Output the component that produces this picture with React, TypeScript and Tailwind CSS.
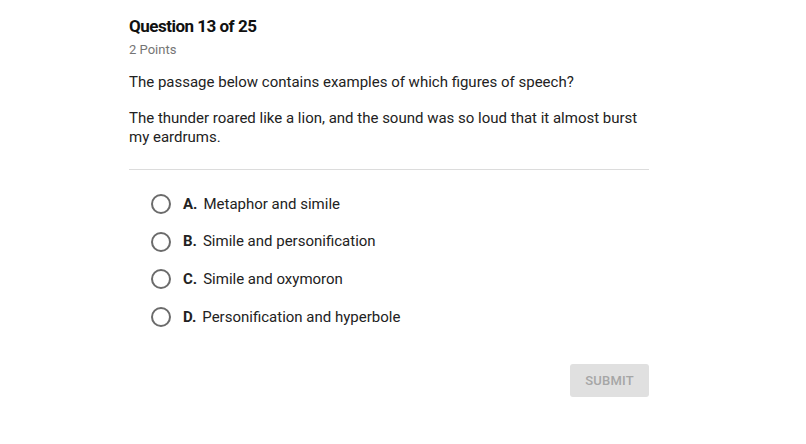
import { useState } from 'react';

const options = [
  { letter: 'A.', text: 'Metaphor and simile' },
  { letter: 'B.', text: 'Simile and personification' },
  { letter: 'C.', text: 'Simile and oxymoron' },
  { letter: 'D.', text: 'Personification and hyperbole' },
];

export default function App() {
  const [selected, setSelected] = useState<string | null>(null);

  return (
    <div className="w-[806px] h-[444px] bg-white font-['Roboto','Liberation_Sans',sans-serif] text-[#222]">
      <div className="w-[520px] ml-[129px] pt-[15px]">
        {/* header */}
        <h1 className="text-[17px] leading-[22px] font-bold tracking-[-0.5px] text-[#111]">Question 13 of 25</h1>
        <p className="mt-[5px] text-[13px] leading-[16px] text-[#757575]">2 Points</p>

        {/* question */}
        <p className="mt-[15px] text-[15px] leading-[19px]">
          The passage below contains examples of which figures of speech?
        </p>
        <p className="mt-[17px] text-[15px] leading-[19px]">
          The thunder roared like a lion, and the sound was so loud that it almost burst my eardrums.
        </p>

        <div className="mt-[22px] border-t border-[#dcdcdc]" />

        {/* options */}
        <div className="mt-[24px] flex flex-col gap-[17.6px] pl-[22px]">
          {options.map((o) => (
            <label
              key={o.letter}
              className="flex items-center h-[20px] cursor-pointer"
              onClick={() => setSelected(o.letter)}
            >
              <span className="w-[20px] h-[20px] rounded-full border-2 border-[#6b6b6b] flex items-center justify-center">
                {selected === o.letter && <span className="w-[10px] h-[10px] rounded-full bg-[#6b6b6b]" />}
              </span>
              <span className="ml-[12px] text-[15px] font-bold">{o.letter}</span>
              <span className="ml-[6px] text-[15px]">{o.text}</span>
            </label>
          ))}
        </div>

        {/* submit */}
        <div className="mt-[37px] flex justify-end">
          <button
            disabled={!selected}
            className="w-[79px] h-[33px] rounded-[3px] bg-[#e0e0e0] text-[13px] font-medium text-[#a6a6a6] tracking-[0.2px]"
          >
            SUBMIT
          </button>
        </div>
      </div>
    </div>
  );
}
